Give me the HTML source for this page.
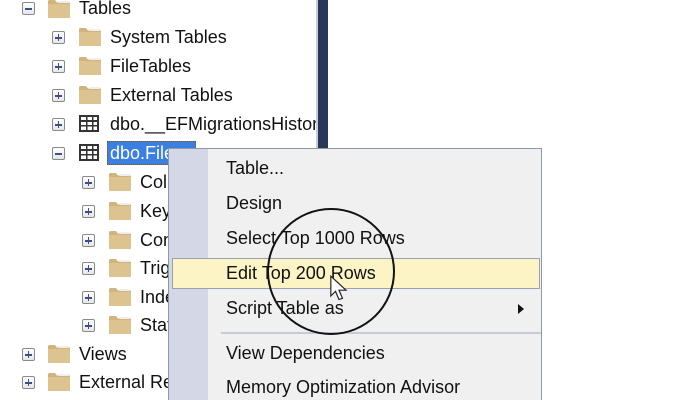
<!DOCTYPE html>
<html><head><meta charset="utf-8"><style>
*{margin:0;padding:0;box-sizing:border-box}
html,body{width:682px;height:400px;overflow:hidden}
body{background:#fff;position:relative;font-family:"Segoe UI","Liberation Sans",sans-serif;font-size:18px;color:#111}
.a{position:absolute}
.exp{position:absolute;width:13px;height:13px;border:1px solid #8a8a8a;border-radius:2px;background:linear-gradient(#fff,#e6e6e6)}
.exp::before{content:"";position:absolute;left:2px;top:5px;width:7px;height:1.6px;background:#3c4f8c}
.exp.p::after{content:"";position:absolute;left:4.7px;top:2.3px;width:1.6px;height:7px;background:#3c4f8c}
.fold{position:absolute;width:22px;height:18px}
.t{position:absolute;line-height:20px;white-space:nowrap}
.grid{position:absolute;width:20px;height:17px;border:2px solid #333;background:
linear-gradient(#333,#333) 0 3px/100% 2px no-repeat,
linear-gradient(#333,#333) 0 8px/100% 1.5px no-repeat,
linear-gradient(#333,#333) 5px 0/1.5px 100% no-repeat,
linear-gradient(#333,#333) 10.5px 0/1.5px 100% no-repeat,#fff}
.mi{position:absolute;left:226px;line-height:22px;white-space:nowrap}
</style></head><body>
<svg width="0" height="0" style="position:absolute"><defs><symbol id="f" viewBox="0 0 22 18"><path d="M0 3 L0 18 L22 18 L22 3 Z" fill="#dcc38f"/><path d="M0 4 L0 1.5 Q0 0 1.5 0 L7 0 L9 2.5 L22 2.5 L22 4 Z" fill="#d0b47c"/><path d="M10 1 L21 1 L21 3 L11 3Z" fill="#eee"/></symbol></defs></svg>

<div class="exp" style="left:22px;top:2px"></div>
<svg class="fold" style="left:48px;top:0"><use href="#f"/></svg>
<div class="t" style="left:79px;top:-2px">Tables</div>

<div class="exp p" style="left:52px;top:31px"></div><svg class="fold" style="left:79px;top:28px"><use href="#f"/></svg><div class="t" style="left:110px;top:27px">System Tables</div>
<div class="exp p" style="left:52px;top:60px"></div><svg class="fold" style="left:79px;top:57px"><use href="#f"/></svg><div class="t" style="left:110px;top:56px">FileTables</div>
<div class="exp p" style="left:52px;top:89px"></div><svg class="fold" style="left:79px;top:86px"><use href="#f"/></svg><div class="t" style="left:110px;top:85px">External Tables</div>
<div class="exp p" style="left:52px;top:118px"></div><div class="grid" style="left:79px;top:115px"></div><div class="t" style="left:110px;top:114px;width:206px;overflow:hidden">dbo.__EFMigrationsHistory</div>
<div class="exp" style="left:52px;top:147px"></div><div class="grid" style="left:79px;top:144px"></div>
<div class="a" style="left:107px;top:141px;width:89px;height:24px;background:#3b7fe0;border:1px dotted #8a5a00"></div>
<div class="t" style="left:110px;top:143px;color:#fff">dbo.Files</div>

<div class="exp p" style="left:82px;top:176px"></div><svg class="fold" style="left:109px;top:173px"><use href="#f"/></svg><div class="t" style="left:140px;top:172px">Columns</div>
<div class="exp p" style="left:82px;top:205px"></div><svg class="fold" style="left:109px;top:202px"><use href="#f"/></svg><div class="t" style="left:140px;top:201px">Keys</div>
<div class="exp p" style="left:82px;top:234px"></div><svg class="fold" style="left:109px;top:231px"><use href="#f"/></svg><div class="t" style="left:140px;top:230px">Constraints</div>
<div class="exp p" style="left:82px;top:262px"></div><svg class="fold" style="left:109px;top:259px"><use href="#f"/></svg><div class="t" style="left:140px;top:258px">Triggers</div>
<div class="exp p" style="left:82px;top:291px"></div><svg class="fold" style="left:109px;top:288px"><use href="#f"/></svg><div class="t" style="left:140px;top:287px">Indexes</div>
<div class="exp p" style="left:82px;top:319px"></div><svg class="fold" style="left:109px;top:316px"><use href="#f"/></svg><div class="t" style="left:140px;top:315px">Statistics</div>
<div class="exp p" style="left:22px;top:348px"></div><svg class="fold" style="left:48px;top:345px"><use href="#f"/></svg><div class="t" style="left:79px;top:344px">Views</div>
<div class="exp p" style="left:22px;top:376px"></div><svg class="fold" style="left:48px;top:373px"><use href="#f"/></svg><div class="t" style="left:79px;top:372px">External Re</div>

<div class="a" style="left:316px;top:0;width:2px;height:148px;background:#c8ccd6"></div>
<div class="a" style="left:318px;top:0;width:10px;height:148px;background:#2b3758"></div>

<div class="a" style="left:168px;top:148px;width:374px;height:252px;background:#f0f0f0;border:1px solid #8d97ad;border-bottom:none;overflow:hidden">
 <div class="a" style="left:0;top:0;width:39px;height:100%;background:#d3d7e6"></div>
 <div class="a" style="left:3px;top:109px;width:368px;height:31px;background:#fdf4c5;border:1px solid #9aa0b4"></div>
 <div class="a" style="left:52px;top:183px;width:320px;height:2px;background:#c7cbd6"></div>
 <div class="a" style="left:349px;top:155px;width:0;height:0;border-left:6px solid #111;border-top:5px solid transparent;border-bottom:5px solid transparent"></div>
</div>
<div class="mi" style="top:157px">Table...</div>
<div class="mi" style="top:192px">Design</div>
<div class="mi" style="top:227px">Select Top 1000 Rows</div>
<div class="mi" style="top:262px">Edit Top 200 Rows</div>
<div class="mi" style="top:297px">Script Table as</div>
<div class="mi" style="top:342px">View Dependencies</div>
<div class="mi" style="top:376px">Memory Optimization Advisor</div>

<div class="a" style="left:267px;top:208px;width:128px;height:127px;border:2px solid #111;border-radius:50%"></div>
<svg class="a" style="left:329px;top:275px" width="20" height="28" viewBox="0 0 16 24"><path d="M1 1 L1 18 L5 14 L8 21 L11 20 L8 13 L14 13 Z" fill="#fff" stroke="#222" stroke-width="1"/></svg>
</body></html>
